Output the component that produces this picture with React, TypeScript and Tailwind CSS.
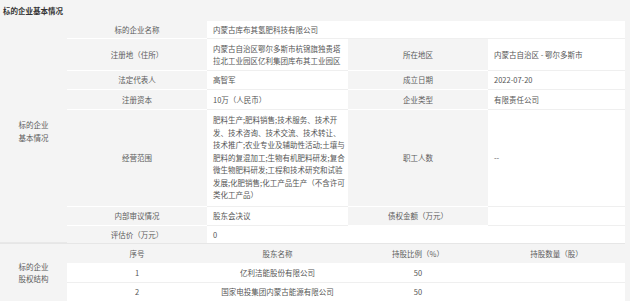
import React from 'react'

const FONT = "font-['Noto_Sans_CJK_SC','Noto_Sans',sans-serif]"

// label cell (grey, centred) and value cell (white, left aligned)
function Label({ children, className = '' }: { children?: React.ReactNode; className?: string }) {
  return (
    <div className={`flex items-center justify-center border-b border-white bg-[#f4f4f4] text-[#5c5c5c] ${className}`}>
      {children}
    </div>
  )
}

function Value({ children, className = '' }: { children?: React.ReactNode; className?: string }) {
  return (
    <div className={`flex items-center border-b border-[#efefef] bg-white px-[6px] text-[#555] ${className}`}>
      {children}
    </div>
  )
}

function Cell({ children, className = '' }: { children?: React.ReactNode; className?: string }) {
  return (
    <div className={`flex items-center justify-center border-b border-[#efefef] bg-white text-[#555] ${className}`}>
      {children}
    </div>
  )
}

const scopeLines = [
  '肥料生产;肥料销售;技术服务、技术开',
  '发、技术咨询、技术交流、技术转让、',
  '技术推广;农业专业及辅助性活动;土壤与',
  '肥料的复混加工;生物有机肥料研发;复合',
  '微生物肥料研发;工程和技术研究和试验',
  '发展;化肥销售;化工产品生产（不含许可',
  '类化工产品）',
]

export default function App() {
  return (
    <div className={`h-[301px] w-[630px] overflow-hidden bg-[#f4f4f4] text-[7.5px] ${FONT}`}>
      <div className="flex h-[21px] items-center pl-[3px] font-bold text-[#333]">标的企业基本情况</div>

      <div className="grid w-[625px] grid-cols-[67px_140px_141px_140px_137px] grid-rows-[18px_32px_19px_20px_97px_19px_17px] border-r border-[#e6e6e6]">
        <div className="row-span-7 flex flex-col items-center justify-center border-b border-[#e8e8e8] bg-[#f4f4f4] leading-[12.5px] text-[#5c5c5c]">
          <span>标的企业</span>
          <span>基本情况</span>
        </div>

        <Label>标的企业名称</Label>
        <Value className="col-span-3">内蒙古库布其氢肥科技有限公司</Value>

        <Label>注册地（住所）</Label>
        <Value className="flex-col !items-start justify-center leading-[12px]">
          <span className="whitespace-nowrap">内蒙古自治区鄂尔多斯市杭锦旗独贵塔</span>
          <span className="whitespace-nowrap">拉北工业园区亿利集团库布其工业园区</span>
        </Value>
        <Label>所在地区</Label>
        <Value>内蒙古自治区 - 鄂尔多斯市</Value>

        <Label>法定代表人</Label>
        <Value>高智军</Value>
        <Label>成立日期</Label>
        <Value>2022-07-20</Value>

        <Label>注册资本</Label>
        <Value>10万（人民币）</Value>
        <Label>企业类型</Label>
        <Value>有限责任公司</Value>

        <Label>经营范围</Label>
        <Value className="flex-col !items-start justify-center leading-[12.5px]">
          {scopeLines.map((l) => (
            <span key={l} className="whitespace-nowrap">
              {l}
            </span>
          ))}
        </Value>
        <Label>职工人数</Label>
        <Value>--</Value>

        <Label>内部审议情况</Label>
        <Value>股东会决议</Value>
        <Label>债权金额（万元）</Label>
        <Value />

        <Label className="!border-b-0">评估价（万元）</Label>
        <Value className="col-span-3 !border-b-0">0</Value>
      </div>

      <div className="grid w-[625px] grid-cols-[67px_140px_141px_140px_137px] grid-rows-[20px_19px_19px] border-r border-t border-[#e6e6e6]">
        <div className="row-span-3 flex flex-col items-center justify-center bg-[#f4f4f4] leading-[12.5px] text-[#5c5c5c]">
          <span>标的企业</span>
          <span>股权结构</span>
        </div>

        <Label>序号</Label>
        <Label>股东名称</Label>
        <Label>持股比例（%）</Label>
        <Label>持股数量（股）</Label>

        <Cell>1</Cell>
        <Cell>亿利洁能股份有限公司</Cell>
        <Cell>50</Cell>
        <Cell />

        <Cell>2</Cell>
        <Cell>国家电投集团内蒙古能源有限公司</Cell>
        <Cell>50</Cell>
        <Cell />
      </div>
    </div>
  )
}
